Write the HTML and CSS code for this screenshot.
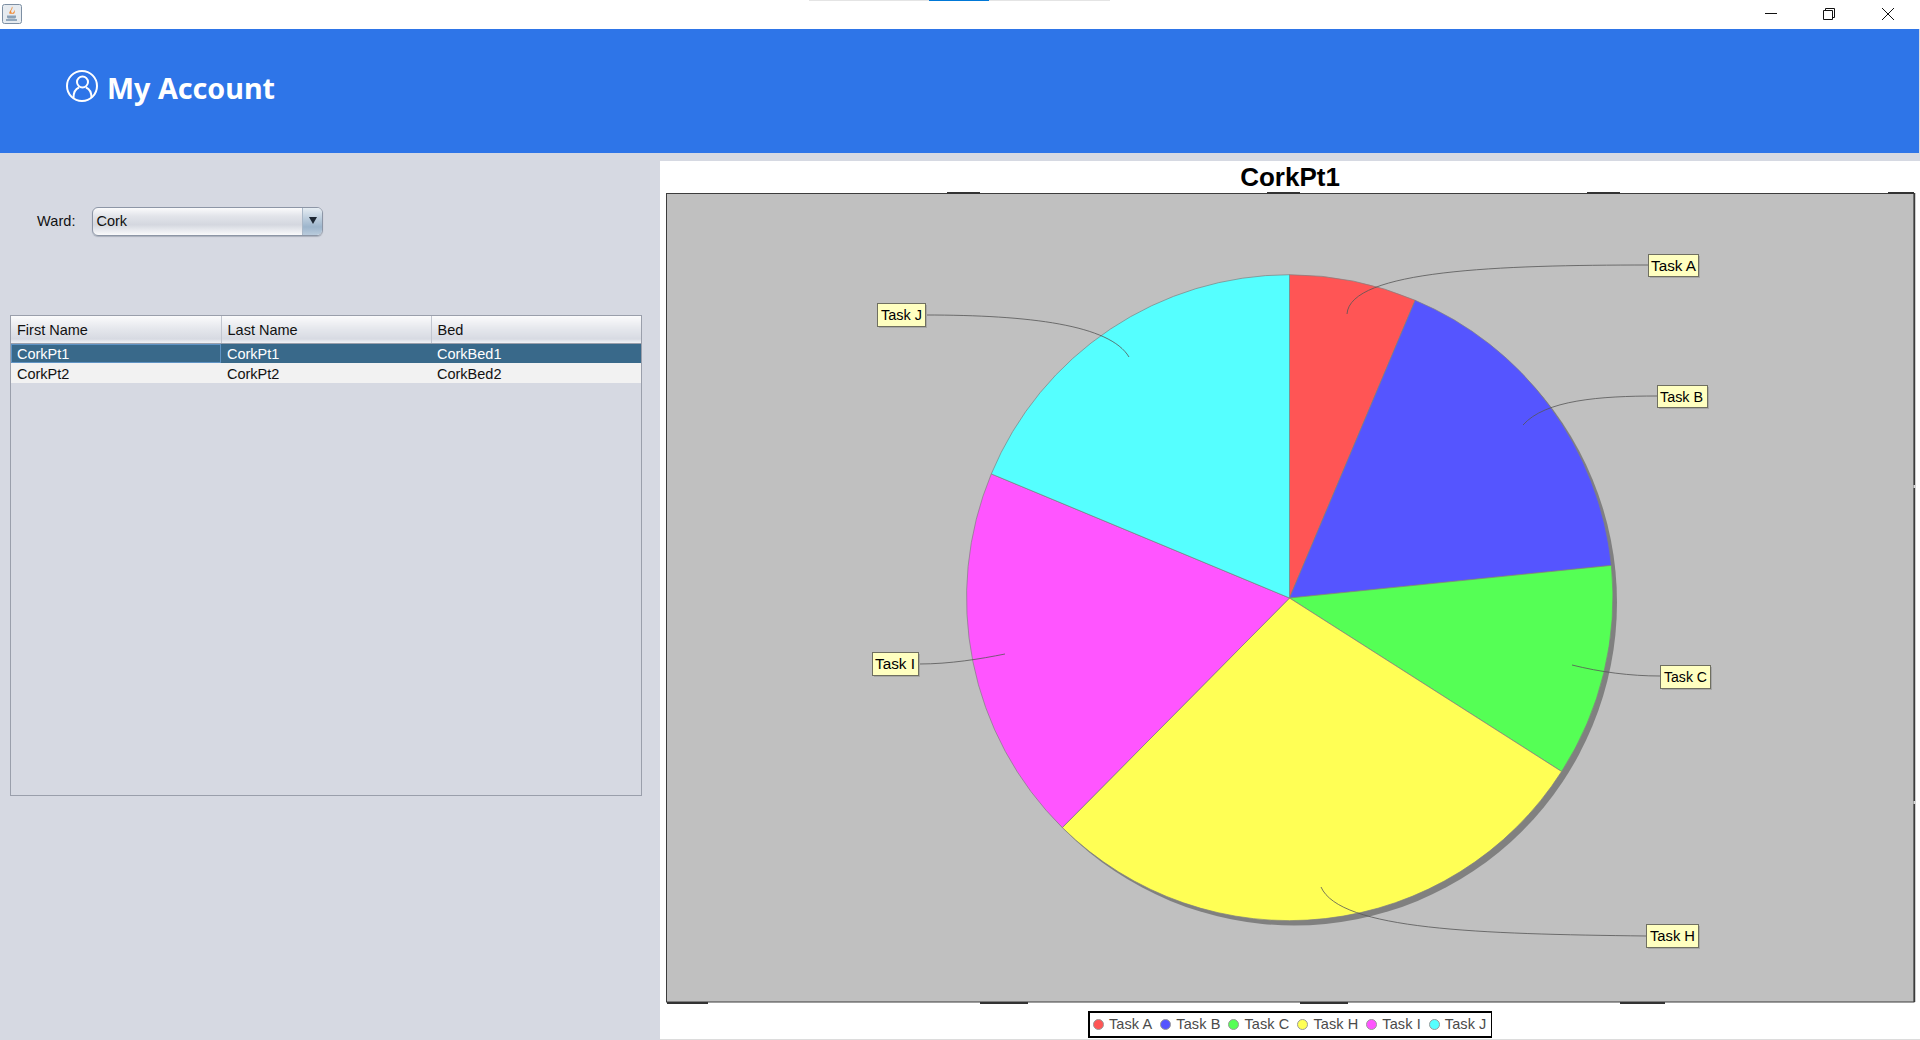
FILE: index.html
```html
<!DOCTYPE html>
<html lang="en">
<head>
<meta charset="utf-8">
<title>My Account</title>
<link rel="stylesheet" href="styles.css">
</head>
<body>
<div class="titlebar">
  <svg class="java" width="20" height="20" viewBox="0 0 20 20">
    <rect x="0.5" y="0.5" width="19" height="19" rx="2" fill="#e6ebf0" stroke="#7d8fa3"/>
    <path d="M10 2.500c2 2-2 3.200-.5 6 .5 1 2 .2 2.500-1.200.5-1.500-.5-1.800-.8-2.300 1.800 1 2 3.500.8 4.800H7.500C6.500 8 9.800 5.500 10 2.500z" fill="#ef8a36"/>
    <path d="M5 11.500h9v1.500c0 1-1 1.500-2 1.500H7c-1 0-2-.5-2-1.500z" fill="#8aa0b5"/>
    <path d="M4 16h11" stroke="#5d7c99" stroke-width="1.200"/>
  </svg>
  <div class="progress"><span class="progress-on"></span></div>
  <div class="winbtns">
    <svg class="win-min" width="12" height="12" viewBox="0 0 12 12"><path d="M0 5.500h12" class="winstroke"/></svg>
    <svg width="12" height="12" viewBox="0 0 12 12"><path d="M.5 2.500h9v9h-9zM2.500 2.500v-2h9v9h-2" class="winstroke"/></svg>
    <svg width="12" height="12" viewBox="0 0 12 12"><path d="M0 0l12 12M12 0L0 12" class="winstroke"/></svg>
  </div>
</div>

<header class="banner">
  <svg class="usericon" width="34" height="34" viewBox="0 0 34 34">
    <circle cx="17" cy="17" r="15" class="userstroke"/>
    <circle cx="17.500" cy="13" r="5.500" class="userstroke"/>
    <path d="M8.500 29c0-6 3-9.500 5.500-10.500M26.500 29c0-6-3-9.500-5.500-10.500" class="userstroke"/>
  </svg>
  <h1 class="banner-title">My Account</h1>
</header>

<main class="content">
  <aside class="side">
    <div class="ward">
      <label class="ward-label">Ward:</label>
      <div class="combo">
        <span class="combo-text">Cork</span>
        <span class="combo-btn"><span class="combo-arrow"></span></span>
      </div>
    </div>
    <div class="tablebox">
      <table class="grid">
        <thead>
          <tr><th>First Name</th><th>Last Name</th><th>Bed</th></tr>
        </thead>
        <tbody>
          <tr class="sel"><td class="focus">CorkPt1</td><td>CorkPt1</td><td>CorkBed1</td></tr>
          <tr class="alt"><td>CorkPt2</td><td>CorkPt2</td><td>CorkBed2</td></tr>
        </tbody>
      </table>
    </div>
  </aside>

  <section class="chart">
    <h2 class="chart-title">CorkPt1</h2>
    <svg class="plot" width="1250" height="812" viewBox="666 192 1250 812">
      <rect x="666.500" y="193.500" width="1247.500" height="808.500" class="plotbg"/>
      <path d="M1914.500 193v809" class="plotedge"/>
      <path d="M1914.500 485v3M1914.500 801v3" class="notch"/>
      <path d="M947 193h33M1267 193h33M1587 193h33M1888 193h26M667 1003h41M980 1003h48M1300 1003h48M1620 1003h45" class="tick"/>
      <circle cx="1294" cy="602.500" r="323" class="pieshadow"/>
      <path d="M1289.500 598V274.700A323.300 323.300 0 0 1 1415.200 300.300Z" class="s-a slice"/>
      <path d="M1289.500 598L1415.200 300.300A323.300 323.300 0 0 1 1611.400 565.400Z" class="s-b slice"/>
      <path d="M1289.500 598L1611.400 565.400A323.300 323.300 0 0 1 1561.600 771.500Z" class="s-c slice"/>
      <path d="M1289.500 598L1561.600 771.500A323.300 323.300 0 0 1 1062.300 827.600Z" class="s-h slice"/>
      <path d="M1289.500 598L1062.300 827.600A323.300 323.300 0 0 1 991.300 473.900Z" class="s-i slice"/>
      <path d="M1289.500 598L991.300 473.900A323.300 323.300 0 0 1 1289.500 274.700Z" class="s-j slice"/>

      <path d="M1648 265C1500 265 1350 270 1347 314" class="leader"/>
      <path d="M1657 396C1600 396 1545 400 1523 425" class="leader"/>
      <path d="M1660 676C1630 676 1600 672 1572 665" class="leader"/>
      <path d="M1646 936C1480 934 1340 930 1321 887" class="leader"/>
      <path d="M919 664C950 664 980 659 1005 654" class="leader"/>
      <path d="M925 315C1030 315 1110 325 1129 357" class="leader"/>

      <g>
        <rect x="1650" y="256" width="50" height="22" class="lblshadow"/>
        <rect x="1648.500" y="254.500" width="50" height="22" class="lblbox"/>
        <text x="1651" y="270.500" textLength="45" lengthAdjust="spacingAndGlyphs" class="lbltext">Task A</text>
      </g>
      <g>
        <rect x="1659" y="387" width="50" height="22" class="lblshadow"/>
        <rect x="1657.500" y="385.500" width="50" height="22" class="lblbox"/>
        <text x="1660" y="401.500" textLength="43" lengthAdjust="spacingAndGlyphs" class="lbltext">Task B</text>
      </g>
      <g>
        <rect x="1662" y="667" width="50" height="23" class="lblshadow"/>
        <rect x="1660.500" y="665.500" width="50" height="23" class="lblbox"/>
        <text x="1664" y="682" textLength="43" lengthAdjust="spacingAndGlyphs" class="lbltext">Task C</text>
      </g>
      <g>
        <rect x="1648" y="926" width="52" height="23" class="lblshadow"/>
        <rect x="1646.500" y="924.500" width="52" height="23" class="lblbox"/>
        <text x="1650" y="941" textLength="45" lengthAdjust="spacingAndGlyphs" class="lbltext">Task H</text>
      </g>
      <g>
        <rect x="874" y="654" width="46" height="23" class="lblshadow"/>
        <rect x="872.500" y="652.500" width="46" height="23" class="lblbox"/>
        <text x="875" y="669" textLength="40" lengthAdjust="spacingAndGlyphs" class="lbltext">Task I</text>
      </g>
      <g>
        <rect x="879" y="305" width="48" height="23" class="lblshadow"/>
        <rect x="877.500" y="303.500" width="48" height="23" class="lblbox"/>
        <text x="881" y="320" textLength="41" lengthAdjust="spacingAndGlyphs" class="lbltext">Task J</text>
      </g>
    </svg>
    <div class="legend-row">
      <ul class="legend">
        <li><span class="dot d-a"></span>Task A</li>
        <li><span class="dot d-b"></span>Task B</li>
        <li><span class="dot d-c"></span>Task C</li>
        <li><span class="dot d-h"></span>Task H</li>
        <li><span class="dot d-i"></span>Task I</li>
        <li><span class="dot d-j"></span>Task J</li>
      </ul>
    </div>
  </section>
</main>
</body>
</html>
```

FILE: styles.css
```css
* { box-sizing: border-box; }
html, body { margin: 0; padding: 0; }
body {
  width: 1920px;
  height: 1040px;
  overflow: hidden;
  background: #d6d9e2;
  font-family: "Liberation Sans", Arial, sans-serif;
  display: flex;
  flex-direction: column;
}

/* window title bar */
.titlebar {
  height: 29px;
  background: #fff;
  display: flex;
  align-items: flex-start;
  flex: none;
  padding: 4px 0 0 2px;
  position: relative;
}
.java { display: block; flex: none; }
.progress {
  position: absolute;
  left: 809px;
  top: 0;
  width: 301px;
  height: 1px;
  background: #e4e4e4;
}
.progress-on {
  display: block;
  margin-left: 120px;
  width: 60px;
  height: 1px;
  background: #0078d7;
}
.winbtns {
  margin-left: auto;
  margin-right: 26px;
  margin-top: 4px;
  display: flex;
  gap: 47px;
}
.winbtns svg { display: block; }
.win-min { margin-right: -1px; }
.winstroke { fill: none; stroke: #111; stroke-width: 1; }

/* blue banner */
.banner {
  height: 124px;
  flex: none;
  width: 1919px;
  background: #2e75e8;
  display: flex;
  align-items: flex-start;
  padding: 40px 0 0 65px;
  color: #fff;
}
.usericon { display: block; flex: none; }
.userstroke { fill: none; stroke: #fff; stroke-width: 2; }
.banner-title {
  margin: -1px 0 0 8px;
  font-family: "Noto Sans", "Open Sans", sans-serif;
  font-weight: 700;
  font-size: 28.700px;
  line-height: 40px;
  color: #fff;
}

/* main area */
.content { flex: 1; display: flex; min-height: 0; }
.side { width: 660px; flex: none; padding-left: 10px; }
.ward {
  display: flex;
  align-items: center;
  margin-top: 54px;
  height: 28px;
  padding-left: 27px;
}
.ward-label { font-size: 14.500px; color: #111; width: 54.500px; flex: none; letter-spacing: 0.1px; }
.combo {
  width: 231px;
  height: 29px;
  display: flex;
  border: 1px solid #8d96a6;
  border-radius: 6px;
  background: linear-gradient(#fbfbfc 0, #e2e4ea 30%, #d4d7df 62%, #e6e8ed 80%, #fafafb 100%);
  box-shadow: 0 1px 1px #aab0bc;
  overflow: hidden;
}
.combo-text { flex: 1; font-size: 14.500px; line-height: 26px; padding-left: 4px; color: #111; }
.combo-btn {
  width: 20px;
  flex: none;
  background: linear-gradient(#e6edf3 0, #c0d0df 35%, #9db5cc 70%, #b9cbdc 100%);
  border-left: 1px solid #aab8c8;
  position: relative;
}
.combo-arrow {
  position: absolute;
  left: 6px;
  top: 9px;
  border-left: 4px solid transparent;
  border-right: 4px solid transparent;
  border-top: 7px solid #1d2733;
}
.tablebox {
  margin-top: 80px;
  width: 632px;
  height: 481px;
  border: 1px solid #9a9fab;
}
.grid {
  width: 630px;
  table-layout: fixed;
  border-collapse: collapse;
  font-size: 14.500px;
}
.grid th {
  height: 27px;
  font-weight: 400;
  text-align: left;
  color: #111;
  padding: 1px 0 0 6px;
  background: linear-gradient(#fbfbfc 0, #e6e8ed 45%, #d7dae2 85%, #f2f3f6 100%);
  border-right: 1px solid #c2c6cf;
  border-bottom: 1px solid #9a9fab;
}
.grid th:last-child { border-right: none; }
.grid td { height: 20px; padding: 1px 0 0 6px; line-height: 18px; }
.sel td { background: #39698a; color: #fff; }
.sel td.focus { box-shadow: inset 0 0 0 1px #5f93c4; }
.alt td { background: #f2f2f2; color: #111; }

/* chart */
.chart {
  flex: 1;
  margin-top: 8px;
  background: #fff;
  padding-left: 6px;
  border-bottom: 1px solid #dcdcdc;
  min-width: 0;
}
.chart-title {
  margin: 0;
  height: 31px;
  text-align: center;
  width: 1248px;
  font-size: 26px;
  line-height: 32px;
  font-weight: 700;
  color: #000;
  font-family: "Liberation Sans", Arial, sans-serif;
}
.plot { display: block; }
.plotbg { fill: #c0c0c0; stroke: #3c3c3c; stroke-width: 1; }
.plotedge { stroke: #3c3c3c; stroke-width: 1.500; fill: none; }
.notch { stroke: #d8d8d8; stroke-width: 2; fill: none; }
.tick { stroke: #333; stroke-width: 2; fill: none; }
.pieshadow { fill: #808080; }
.slice { stroke: #808080; stroke-width: 0.700; }
.s-a { fill: #ff5555; }
.s-b { fill: #5555ff; }
.s-c { fill: #55ff55; }
.s-h { fill: #ffff55; }
.s-i { fill: #ff55ff; }
.s-j { fill: #55ffff; }
.leader { fill: none; stroke: #555; stroke-width: 0.800; }
.lblbox { fill: #ffffc0; stroke: #6f6f60; stroke-width: 1; }
.lblshadow { fill: #a6a6a6; }
.lbltext { font-family: "Liberation Sans", Arial, sans-serif; font-size: 15.500px; fill: #000; }

.legend-row {
  width: 1254px;
  display: flex;
  padding: 7px 0 0 422px;
}
.legend {
  list-style: none;
  margin: 0;
  width: 404px;
  height: 27px;
  border: 2px solid #000;
  border-right-width: 1px;
  padding: 0 0 0 3px;
  display: flex;
  background: #fff;
  font-size: 14.500px;
  color: #4a4a4a;
  white-space: nowrap;
}
.legend li { display: flex; align-items: center; height: 22px; margin-right: 8px; letter-spacing: 0.100px; }
.dot {
  width: 11px;
  height: 11px;
  flex: none;
  border-radius: 50%;
  margin-right: 5px;
  border: 1px solid #9a9a9a;
}
.d-a { background: #ff5555; }
.d-b { background: #5555ff; }
.d-c { background: #55ff55; }
.d-h { background: #ffff55; }
.d-i { background: #ff55ff; }
.d-j { background: #55ffff; }
```
